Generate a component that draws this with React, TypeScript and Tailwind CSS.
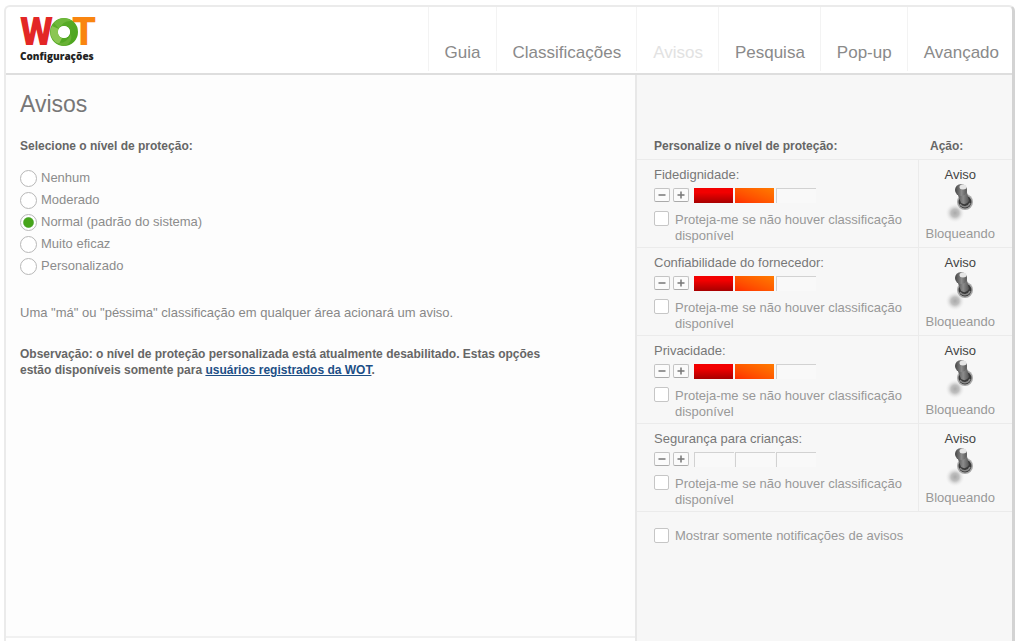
import React, { useState } from "react";

const tabs = ["Guia", "Classificações", "Avisos", "Pesquisa", "Pop-up", "Avançado"];

const levels = [
  "Nenhum",
  "Moderado",
  "Normal (padrão do sistema)",
  "Muito eficaz",
  "Personalizado",
];

const ratings = [
  { id: "trust", title: "Fidedignidade:", value: 2 },
  { id: "vendor", title: "Confiabilidade do fornecedor:", value: 2 },
  { id: "privacy", title: "Privacidade:", value: 2 },
  { id: "child", title: "Segurança para crianças:", value: 0 },
];

const Logo: React.FC = () => (
  <svg width="78" height="28" viewBox="0 0 78 28" role="img" aria-label="WOT" className="overflow-visible">
    <defs>
      <linearGradient id="ring" x1="0" y1="0" x2="1" y2="1">
        <stop offset="0" stopColor="#5cad2c" />
        <stop offset="1" stopColor="#4ea51f" />
      </linearGradient>
    </defs>
    <text x="0" y="27" fill="#e32726" fontFamily="Roboto" fontWeight="900" fontSize="38">W</text>
    <text x="52" y="27" fill="#f98510" fontFamily="Roboto" fontWeight="900" fontSize="38">T</text>
    <circle cx="44" cy="14" r="10" fill="none" stroke="url(#ring)" strokeWidth="8" />
    <path d="M32 20a14 14 0 0 1 0-12l7 3a6 6 0 0 0 3 9l-3 6a14 14 0 0 1-7-6z" fill="#8bc653" />
    <path d="M34 5a13 13 0 0 1 18-2q-9-1-13 8z" fill="#6fb83c" />
    <path d="M37 25q10 1 14-9q2 8-6 12a13 13 0 0 1-8-3z" fill="#68b135" />
    <circle cx="44" cy="14" r="6" fill="#fff" />
  </svg>
);

const Lever: React.FC = () => (
  <svg width="30" height="40" viewBox="0 0 30 40" aria-hidden="true">
    <defs>
      <linearGradient id="stick" x1="0" y1="0" x2="1" y2="0">
        <stop offset="0" stopColor="#444" />
        <stop offset="0.55" stopColor="#8c8c8c" />
        <stop offset="1" stopColor="#555" />
      </linearGradient>
      <radialGradient id="shade">
        <stop offset="0" stopColor="#aaa" />
        <stop offset="0.4" stopColor="#c0c0c0" />
        <stop offset="1" stopColor="#f7f7f7" stopOpacity="0" />
      </radialGradient>
    </defs>
    <ellipse cx="10" cy="30" rx="10" ry="10" fill="url(#shade)" />
    <circle cx="20" cy="19" r="8" fill="#a8a8a8" />
    <circle cx="20" cy="19" r="6.5" fill="#3a3a3a" />
    <path d="M15 21a5.500 5.500 0 0 0 10-1" fill="none" stroke="#888" strokeWidth="1.500" />
    <path d="M11 7L21 5l3 13q-3 5-8 2z" fill="url(#stick)" />
    <ellipse cx="16" cy="7" rx="6" ry="6" fill="url(#stick)" />
    <ellipse cx="18" cy="4" rx="3.500" ry="2.500" fill="#e6e6e6" />
  </svg>
);

const StepButton: React.FC<{ label: string; plus?: boolean; onClick: () => void }> = ({
  label,
  plus,
  onClick,
}) => (
  <button
    type="button"
    aria-label={label}
    onClick={onClick}
    className="flex h-[14px] w-4 items-center justify-center rounded-xs border border-[#c4c4c4] border-b-[#aaa] bg-[#fbfbfb]"
  >
    <svg width="8" height="8" viewBox="0 0 8 8" stroke="#777" strokeWidth="1.5">
      <path d={plus ? "M0.5 4h7M4 0.5v7" : "M0.5 4h7"} />
    </svg>
  </button>
);

const Segment: React.FC<{ on: boolean; index: number }> = ({ on, index }) => {
  const fill = index === 0 ? "bg-linear-to-t from-[#a80000] to-[#f20000] to-70%" : "bg-linear-to-tr from-[#ff2a00] to-[#ff7a00]";
  return on ? (
    <span className={`mr-[2px] block h-[15px] w-[39px] ${fill}`} />
  ) : (
    <span className="mr-px block h-[15px] w-10 border-t border-l border-[#d2d2d2] bg-[#f9f9f9]" />
  );
};

const checkbox =
  "h-[15px] w-[15px] shrink-0 appearance-none rounded-xs border border-[#c6c6c6] bg-white checked:bg-[#4ea51f]";

const RatingRow: React.FC<{ id: string; title: string; initial: number }> = ({ id, title, initial }) => {
  const [value, setValue] = useState(initial);
  const [blocking, setBlocking] = useState(false);

  return (
    <tr className="h-[88px] border-b border-[#ebebeb] align-top">
      <td className="pt-[7px] pr-3 pl-[17px]">
        <div className="text-[#777]">{title}</div>
        <div className="mt-[5px] flex h-[15px] items-center gap-[3px]">
          <StepButton label={`Diminuir ${title}`} onClick={() => setValue(Math.max(0, value - 1))} />
          <StepButton label={`Aumentar ${title}`} plus onClick={() => setValue(Math.min(3, value + 1))} />
          <div className="ml-[2px] flex">
            {[0, 1, 2].map((i) => (
              <Segment key={i} index={i} on={i < value} />
            ))}
          </div>
        </div>
        <div className="mt-2 flex items-start gap-[6px]">
          <input id={id} type="checkbox" className={checkbox} />
          <label htmlFor={id} className="pt-px text-[#999]">
            Proteja-me se não houver classificação disponível
          </label>
        </div>
      </td>
      <td className="border-l border-[#ebebeb] pt-[7px] pr-[10px] text-center">
        <div className="text-[#444]">Aviso</div>
        <button
          type="button"
          role="switch"
          aria-checked={blocking}
          aria-label={`Bloqueando ${title}`}
          onClick={() => setBlocking(!blocking)}
          className="mx-auto flex h-[43px] items-start"
        >
          <Lever />
        </button>
        <div className="text-[#999]">Bloqueando</div>
      </td>
    </tr>
  );
};

const App: React.FC = () => {
  const [level, setLevel] = useState(2);

  return (
    <div className="flex min-h-screen flex-col bg-white pt-[5px] pr-[5px] pl-1 font-['Liberation_Sans',Arial,sans-serif] text-[13px] leading-4">
      <div className="flex flex-1 flex-col rounded-t-md border-t-2 border-r-3 border-l-2 border-[#ebebeb] border-r-[#d3d3d3]">
        {/* Header */}
        <header className="flex h-[68px] justify-between border-b-2 border-[#dedede]">
          <div className="pt-[11px] pl-[14px]">
            <Logo />
            <div className="mt-1 font-['Open_Sans',sans-serif] text-[10px] leading-3 font-extrabold text-[#222]">
              Configurações
            </div>
          </div>
          <nav className="flex text-[17px] leading-5">
            {tabs.map((tab) => (
              <a
                key={tab}
                href="#"
                className={`mb-[2px] border-l border-[#f3f3f3] pt-9 pr-[15px] pl-4 last:pr-[13px] ${
                  tab === "Avisos" ? "text-[#e2e2e2]" : "text-[#8a8a8a]"
                }`}
              >
                {tab}
              </a>
            ))}
          </nav>
        </header>

        <div className="flex flex-1">
          {/* Protection level */}
          <main className="mb-[3px] flex-1 border-b-2 border-[#f1f1f1] bg-[#fdfdfd] pl-[14px]">
            <h1 className="pt-[15px] text-[23px] leading-7 text-[#777]">Avisos</h1>
            <fieldset className="mt-5">
              <legend className="text-[12px] font-bold text-[#666]">Selecione o nível de proteção:</legend>
              <div className="mt-[13px]">
                {levels.map((name, i) => (
                  <label key={name} className="flex h-[22px] items-center gap-1 text-[#8c8c8c]">
                    <input
                      type="radio"
                      name="level"
                      checked={level === i}
                      onChange={() => setLevel(i)}
                      className="h-[17px] w-[17px] appearance-none rounded-full border border-[#b8b8b8] bg-white bg-clip-padding checked:bg-radial checked:from-[#46a41a] checked:from-45% checked:to-white checked:to-55%"
                    />
                    {name}
                  </label>
                ))}
              </div>
            </fieldset>
            <p className="mt-7 text-[#888]">
              Uma "má" ou "péssima" classificação em qualquer área acionará um aviso.
            </p>
            <p className="mt-[25px] max-w-[540px] text-[12px] font-bold text-[#666]">
              Observação: o nível de proteção personalizada está atualmente desabilitado. Estas opções
              estão disponíveis somente para{" "}
              <a href="#" className="text-[#1d4f86] underline">
                usuários registrados da WOT
              </a>
              .
            </p>
          </main>

          {/* Custom settings */}
          <aside className="w-[377px] border-l-2 border-[#e8e8e8] bg-[#f7f7f7]">
            <table className="w-full table-fixed border-collapse">
              <thead>
                <tr className="h-[84px] border-b border-[#ebebeb] text-left align-bottom text-[12px] text-[#666]">
                  <th className="pb-[5px] pl-[17px]">Personalize o nível de proteção:</th>
                  <th className="w-[94px] pb-[5px] pl-3">Ação:</th>
                </tr>
              </thead>
              <tbody>
                {ratings.map((r) => (
                  <RatingRow key={r.id} id={r.id} title={r.title} initial={r.value} />
                ))}
              </tbody>
            </table>
            <div className="flex items-center gap-[6px] pt-4 pl-[17px]">
              <input id="notify" type="checkbox" className={checkbox} />
              <label htmlFor="notify" className="text-[#999]">
                Mostrar somente notificações de avisos
              </label>
            </div>
          </aside>
        </div>
      </div>
    </div>
  );
};

export default App;
